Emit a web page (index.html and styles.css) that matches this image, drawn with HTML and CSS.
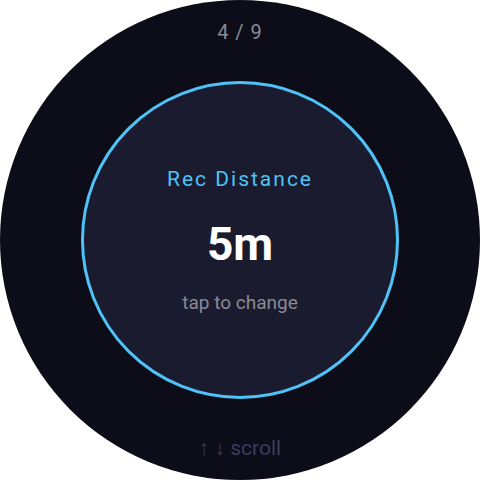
FILE: index.html
```
<!DOCTYPE html>
<html>
<head>
<meta charset="utf-8">
<link rel="stylesheet" href="styles.css">
</head>
<body>
<div class="watch">
  <div class="pager">4 / 9</div>
  <div class="dial">
    <div class="label">Rec Distance</div>
    <div class="value">5m</div>
    <div class="hint">tap to change</div>
  </div>
  <div class="scroll">↑ ↓ scroll</div>
</div>
</body>
</html>
```
FILE: styles.css
```
html, body {
  margin: 0;
  padding: 0;
  background: #ffffff;
}
body {
  font-family: Roboto, "Liberation Sans", sans-serif;
}
.watch {
  width: 480px;
  height: 480px;
  border-radius: 50%;
  background: #0c0d19;
  display: flex;
  flex-direction: column;
  align-items: center;
  justify-content: space-between;
  padding: 19px 0;
  box-sizing: border-box;
}
.pager {
  font-size: 20px;
  line-height: 26px;
  color: #8a8a94;
  letter-spacing: 1px;
}
.scroll {
  font-size: 21px;
  line-height: 26px;
  color: #3c3c5e;
}
.dial {
  width: 318px;
  height: 318px;
  box-sizing: border-box;
  border: 3px solid #4fc3f7;
  border-radius: 50%;
  background: #1a1b2e;
  display: flex;
  flex-direction: column;
  align-items: center;
  justify-content: center;
}
.label {
  font-size: 21px;
  line-height: 26px;
  color: #4fc3f7;
  letter-spacing: 2px;
}
.value {
  font-size: 46px;
  line-height: 54px;
  font-weight: 700;
  color: #ffffff;
  margin-top: 25px;
}
.hint {
  font-size: 19px;
  line-height: 24px;
  color: #8a8a94;
  margin-top: 20px;
}
```
